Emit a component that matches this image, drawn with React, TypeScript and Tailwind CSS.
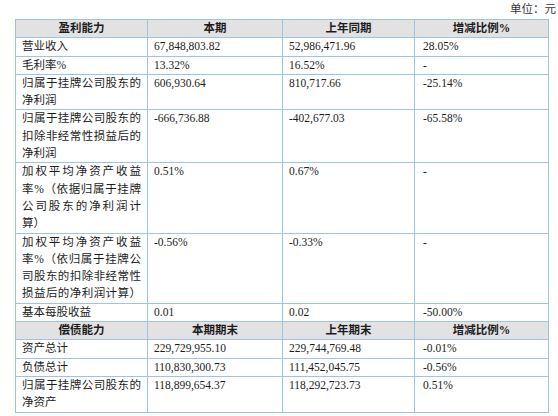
type Row = {
  label: string[];
  cur: string;
  prev: string;
  change: string;
};

const profitRows: Row[] = [
  { label: ["营业收入"], cur: "67,848,803.82", prev: "52,986,471.96", change: "28.05%" },
  { label: ["毛利率%"], cur: "13.32%", prev: "16.52%", change: "-" },
  { label: ["归属于挂牌公司股东的", "净利润"], cur: "606,930.64", prev: "810,717.66", change: "-25.14%" },
  {
    label: ["归属于挂牌公司股东的", "扣除非经常性损益后的", "净利润"],
    cur: "-666,736.88",
    prev: "-402,677.03",
    change: "-65.58%",
  },
  {
    label: ["加权平均净资产收益", "率%（依据归属于挂牌", "公司股东的净利润计", "算）"],
    cur: "0.51%",
    prev: "0.67%",
    change: "-",
  },
  {
    label: ["加权平均净资产收益", "率%（依归属于挂牌公", "司股东的扣除非经常性", "损益后的净利润计算）"],
    cur: "-0.56%",
    prev: "-0.33%",
    change: "-",
  },
  { label: ["基本每股收益"], cur: "0.01", prev: "0.02", change: "-50.00%" },
];

const debtRows: Row[] = [
  { label: ["资产总计"], cur: "229,729,955.10", prev: "229,744,769.48", change: "-0.01%" },
  { label: ["负债总计"], cur: "110,830,300.73", prev: "111,452,045.75", change: "-0.56%" },
  { label: ["归属于挂牌公司股东的", "净资产"], cur: "118,899,654.37", prev: "118,292,723.73", change: "0.51%" },
];

const cell = "border border-[#9dc3e6] px-[6px] py-0 align-top";
const head = "border border-[#9dc3e6] bg-[#e2e2e2] py-0 text-center font-bold";

function Label({ lines }: { lines: string[] }) {
  return (
    <>
      {lines.map((l, i) => (
        <div
          key={i}
          className={
            i < lines.length - 1 || lines.length > 1 && l.length >= 9
              ? "text-justify [text-align-last:justify] whitespace-nowrap"
              : "whitespace-nowrap"
          }
        >
          {l}
        </div>
      ))}
    </>
  );
}

function Header({ cols }: { cols: string[] }) {
  return (
    <tr>
      {cols.map((c) => (
        <td key={c} className={head}>
          {c}
        </td>
      ))}
    </tr>
  );
}

function Body({ rows }: { rows: Row[] }) {
  return (
    <>
      {rows.map((r) => (
        <tr key={r.label.join("")}>
          <td className={cell}>
            <Label lines={r.label} />
          </td>
          <td className={cell}>{r.cur}</td>
          <td className={cell}>{r.prev}</td>
          <td className={cell + " pl-[8px]"}>{r.change}</td>
        </tr>
      ))}
    </>
  );
}

export default function App() {
  return (
    <div
      className="w-[558px] h-[416px] overflow-hidden bg-white text-[#1c1c1c] text-[11.5px] leading-[17.3px]"
      style={{ fontFamily: '"Liberation Serif", "Noto Sans CJK SC", serif' }}
    >
      <div className="flex justify-end h-[19px] items-center pr-[2px] text-[#333]">单位：元</div>
      <table className="ml-[15px] w-[533px] table-fixed border-collapse">
        <colgroup>
          <col className="w-[132px]" />
          <col className="w-[135px]" />
          <col className="w-[132px]" />
          <col className="w-[134px]" />
        </colgroup>
        <tbody>
          <Header cols={["盈利能力", "本期", "上年同期", "增减比例%"]} />
          <Body rows={profitRows} />
          <Header cols={["偿债能力", "本期期末", "上年期末", "增减比例%"]} />
          <Body rows={debtRows} />
        </tbody>
      </table>
    </div>
  );
}
